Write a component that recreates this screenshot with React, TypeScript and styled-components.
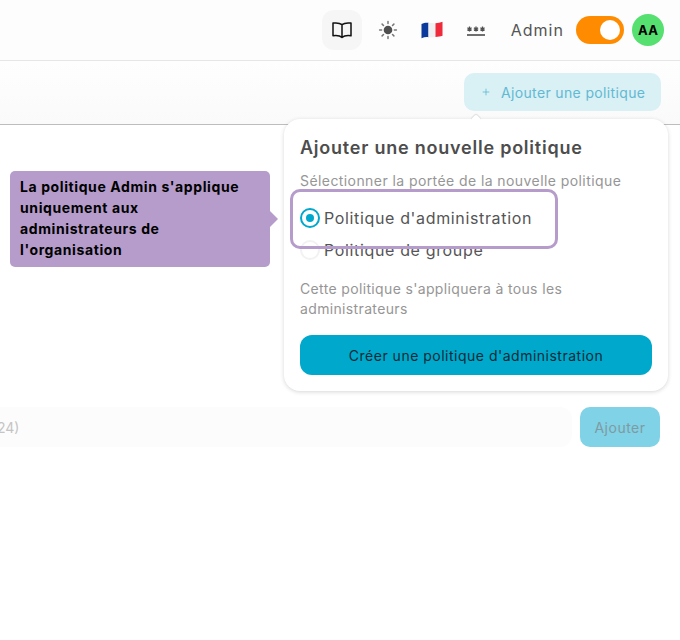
import { FC } from "react";
import styled, { createGlobalStyle } from "styled-components";
import { Plus } from "lucide-react";

const GlobalStyle = createGlobalStyle`
  html, body {
    margin: 0;
    height: 100%;
    background: #fff;
    overflow: hidden;
  }
  * {
    box-sizing: border-box;
  }
  body {
    font-family: "Inter", "Liberation Sans", sans-serif;
  }
`;

const Page = styled.div`
  position: relative;
  width: 680px;
  height: 640px;
  overflow: hidden;
`;

const Header = styled.header`
  display: flex;
  align-items: center;
  height: 61px;
  padding: 0 16px 1px 322px;
  background: #fdfdfd;
  border-bottom: 1px solid #e6e6e6;
  box-shadow: 0 1px 3px rgba(0, 0, 0, 0.05);
`;

const BookButton = styled.div`
  display: flex;
  align-items: center;
  justify-content: center;
  width: 40px;
  height: 40px;
  border-radius: 12px;
  background: #f6f6f6;
`;

const IconSlot = styled.div<{ $width: number; $left: number }>`
  display: flex;
  align-items: center;
  justify-content: center;
  width: ${(p) => p.$width}px;
  margin-left: ${(p) => p.$left}px;
`;

const RoleLabel = styled.span`
  width: 54px;
  margin-left: 25px;
  font-size: 16px;
  letter-spacing: 1px;
  color: #555;
`;

const Toggle = styled.div`
  display: flex;
  align-items: center;
  justify-content: flex-end;
  width: 48px;
  height: 28px;
  margin-left: 12px;
  padding-right: 4px;
  border-radius: 14px;
  background: #ff8c00;
`;

const Knob = styled.div`
  width: 20px;
  height: 20px;
  border-radius: 50%;
  background: #fff;
`;

const Avatar = styled.div`
  display: flex;
  align-items: center;
  justify-content: center;
  width: 32px;
  height: 32px;
  margin-left: 8px;
  border-radius: 50%;
  background: #55e070;
  color: #000;
  font-size: 13px;
  font-weight: 700;
  letter-spacing: 0.3px;
`;

const Toolbar = styled.div`
  display: flex;
  justify-content: flex-end;
  height: 64px;
  padding: 12px 19px 0 0;
  background: linear-gradient(#fefefe, #fafafa);
  border-bottom: 1px solid #bdbdbd;
`;

const AddPolicyButton = styled.div`
  display: flex;
  align-items: center;
  width: 197px;
  height: 38px;
  padding-left: 17px;
  border-radius: 10px;
  background: #d9f0f5;
  color: #62b9d3;
  font-size: 14px;
  letter-spacing: 0.35px;
  white-space: nowrap;
`;

const AddPolicyLabel = styled.span`
  margin-left: 10px;
`;

const FormRow = styled.div`
  display: flex;
  justify-content: flex-end;
  gap: 8px;
  margin-top: 282px;
  padding-right: 20px;
`;

const ValueInput = styled.div`
  flex: 1;
  height: 40px;
  display: flex;
  align-items: center;
  text-indent: -3px;
  border-radius: 0 12px 12px 0;
  background: #fcfcfc;
  color: #c4c4c4;
  font-size: 14px;
`;

const SubmitButton = styled.div`
  display: flex;
  align-items: center;
  justify-content: center;
  width: 80px;
  height: 40px;
  border-radius: 10px;
  background: #80d2e6;
  color: #7f9aa3;
  font-size: 14px;
  letter-spacing: 0.5px;
`;

const Popover = styled.section`
  position: absolute;
  top: 119px;
  left: 284px;
  width: 384px;
  height: 272px;
  padding: 18px 16px 16px;
  border-radius: 16px;
  background: #fff;
  box-shadow: 0 1px 4px rgba(0, 0, 0, 0.16);
`;

const PopoverArrow = styled.div`
  position: absolute;
  top: -3px;
  left: 188px;
  width: 8px;
  height: 8px;
  background: #fff;
  border-radius: 2px;
  transform: rotate(45deg);
  box-shadow: -1px -1px 1px rgba(0, 0, 0, 0.1);
`;

const PopoverTitle = styled.h3`
  margin: 0;
  font-size: 18px;
  line-height: 22px;
  font-weight: 600;
  letter-spacing: 0.77px;
  color: #4d4d4d;
`;

const PopoverHint = styled.p`
  margin: 12px 0 0;
  font-size: 14px;
  line-height: 20px;
  letter-spacing: 0.42px;
  color: #969696;
`;

const RadioList = styled.div`
  display: flex;
  flex-direction: column;
  gap: 12px;
  margin-top: 17px;
`;

const RadioRow = styled.div`
  display: flex;
  align-items: center;
  gap: 4px;
  height: 20px;
  font-size: 16px;
  letter-spacing: 0.65px;
  color: #555;
`;

const RadioMark = styled.span<{ $checked?: boolean }>`
  display: flex;
  align-items: center;
  justify-content: center;
  width: 20px;
  height: 20px;
  border-radius: 50%;
  border: 2px solid ${(p) => (p.$checked ? "#00a8cc" : "#f2f2f2")};
  &::after {
    content: "";
    width: 8px;
    height: 8px;
    border-radius: 50%;
    background: ${(p) => (p.$checked ? "#00a8cc" : "transparent")};
  }
`;

const PopoverNote = styled(PopoverHint)`
  margin-top: 19px;
  width: 330px;
  letter-spacing: 0.35px;
`;

const CreateButton = styled.div`
  display: flex;
  align-items: center;
  justify-content: center;
  height: 40px;
  margin-top: 16px;
  border-radius: 12px;
  background: #00a8cc;
  color: #0c2b36;
  font-size: 14px;
  letter-spacing: 0.5px;
`;

const Highlight = styled.div`
  position: absolute;
  top: 189px;
  left: 290px;
  width: 268px;
  height: 60px;
  border: 3px solid #b59ccb;
  border-radius: 10px;
`;

const Callout = styled.div`
  position: absolute;
  top: 171px;
  left: 10px;
  width: 260px;
  height: 96px;
  padding: 5px 14px 5px 10px;
  border-radius: 5px;
  background: #b59ccb;
  color: #000;
  font-size: 14px;
  line-height: 21px;
  font-weight: 700;
  letter-spacing: 0.6px;
  &::after {
    content: "";
    position: absolute;
    top: 40px;
    right: -8px;
    border-top: 8px solid transparent;
    border-bottom: 8px solid transparent;
    border-left: 8px solid #b59ccb;
  }
`;

const BookIcon: FC = () => (
  <svg width="20" height="20" viewBox="0 0 20 20" fill="none">
    <path
      d="M10 4.6C8 3 5 2.6 1 3.1V15.8C5 15.3 8 15.7 10 17.4C12 15.7 15 15.3 19 15.8V3.1C15 2.6 12 3 10 4.6ZM10 4.6V17.4"
      stroke="#111"
      strokeWidth="1.5"
      strokeLinejoin="round"
    />
  </svg>
);

const SunIcon: FC = () => (
  <svg width="20" height="20" viewBox="0 0 20 20" fill="none">
    <circle cx="10" cy="10" r="4.3" fill="#4f4f4f" />
    <path
      d="M10 1.6v2M10 16.4v2M1.6 10h2M16.4 10h2M4.1 4.1l1.4 1.4M14.5 14.5l1.4 1.4M4.1 15.9l1.4-1.4M14.5 5.5l1.4-1.4"
      stroke="#777"
      strokeWidth="1.5"
      strokeLinecap="round"
    />
  </svg>
);

const FlagIcon: FC = () => (
  <svg width="22" height="18" viewBox="0 0 22 18">
    <path d="M0.5 3C3 1.8 5 1.5 7.5 1.8V16.2C5 15.9 3 16.2 0.5 17.2Z" fill="#0a3a9c" />
    <path d="M7.5 1.8C10 2.1 12 2.3 14.5 2.2V15.9C12 16.2 10 16.3 7.5 16.2Z" fill="#f0f0f0" />
    <path d="M14.5 2.2C17 2.1 19.5 1.6 21.5 0.8V14.8C19.5 15.4 17 15.7 14.5 15.9Z" fill="#ee2a3b" />
  </svg>
);

const MaskIcon: FC = () => (
  <svg width="20" height="16" viewBox="0 0 20 16" fill="none">
    <path
      d="M3.5 4.6v5M1.4 5.8l4.2 2.6M5.6 5.8L1.4 8.4M10 4.6v5M7.9 5.8l4.2 2.6M12.1 5.8L7.9 8.4M16.5 4.6v5M14.4 5.8l4.2 2.6M18.6 5.8L14.4 8.4"
      stroke="#4f4f4f"
      strokeWidth="1.3"
    />
    <path d="M1 13h18" stroke="#5f5f5f" strokeWidth="1.8" />
  </svg>
);

const App: FC = () => {
  return (
    <Page>
      <GlobalStyle />
      <Header>
        <BookButton>
          <BookIcon />
        </BookButton>
        <IconSlot $width={20} $left={16}>
          <SunIcon />
        </IconSlot>
        <IconSlot $width={22} $left={23}>
          <FlagIcon />
        </IconSlot>
        <IconSlot $width={20} $left={23}>
          <MaskIcon />
        </IconSlot>
        <RoleLabel>Admin</RoleLabel>
        <Toggle>
          <Knob />
        </Toggle>
        <Avatar>AA</Avatar>
      </Header>
      <Toolbar>
        <AddPolicyButton>
          <Plus size={10} strokeWidth={2} />
          <AddPolicyLabel>Ajouter une politique</AddPolicyLabel>
        </AddPolicyButton>
      </Toolbar>
      <FormRow>
        <ValueInput>24)</ValueInput>
        <SubmitButton>Ajouter</SubmitButton>
      </FormRow>
      <Popover>
        <PopoverArrow />
        <PopoverTitle>Ajouter une nouvelle politique</PopoverTitle>
        <PopoverHint>Sélectionner la portée de la nouvelle politique</PopoverHint>
        <RadioList>
          <RadioRow>
            <RadioMark $checked />
            Politique d'administration
          </RadioRow>
          <RadioRow>
            <RadioMark />
            Politique de groupe
          </RadioRow>
        </RadioList>
        <PopoverNote>Cette politique s'appliquera à tous les administrateurs</PopoverNote>
        <CreateButton>Créer une politique d'administration</CreateButton>
      </Popover>
      <Highlight />
      <Callout>La politique Admin s'applique uniquement aux administrateurs de l'organisation</Callout>
    </Page>
  );
};

export default App;
